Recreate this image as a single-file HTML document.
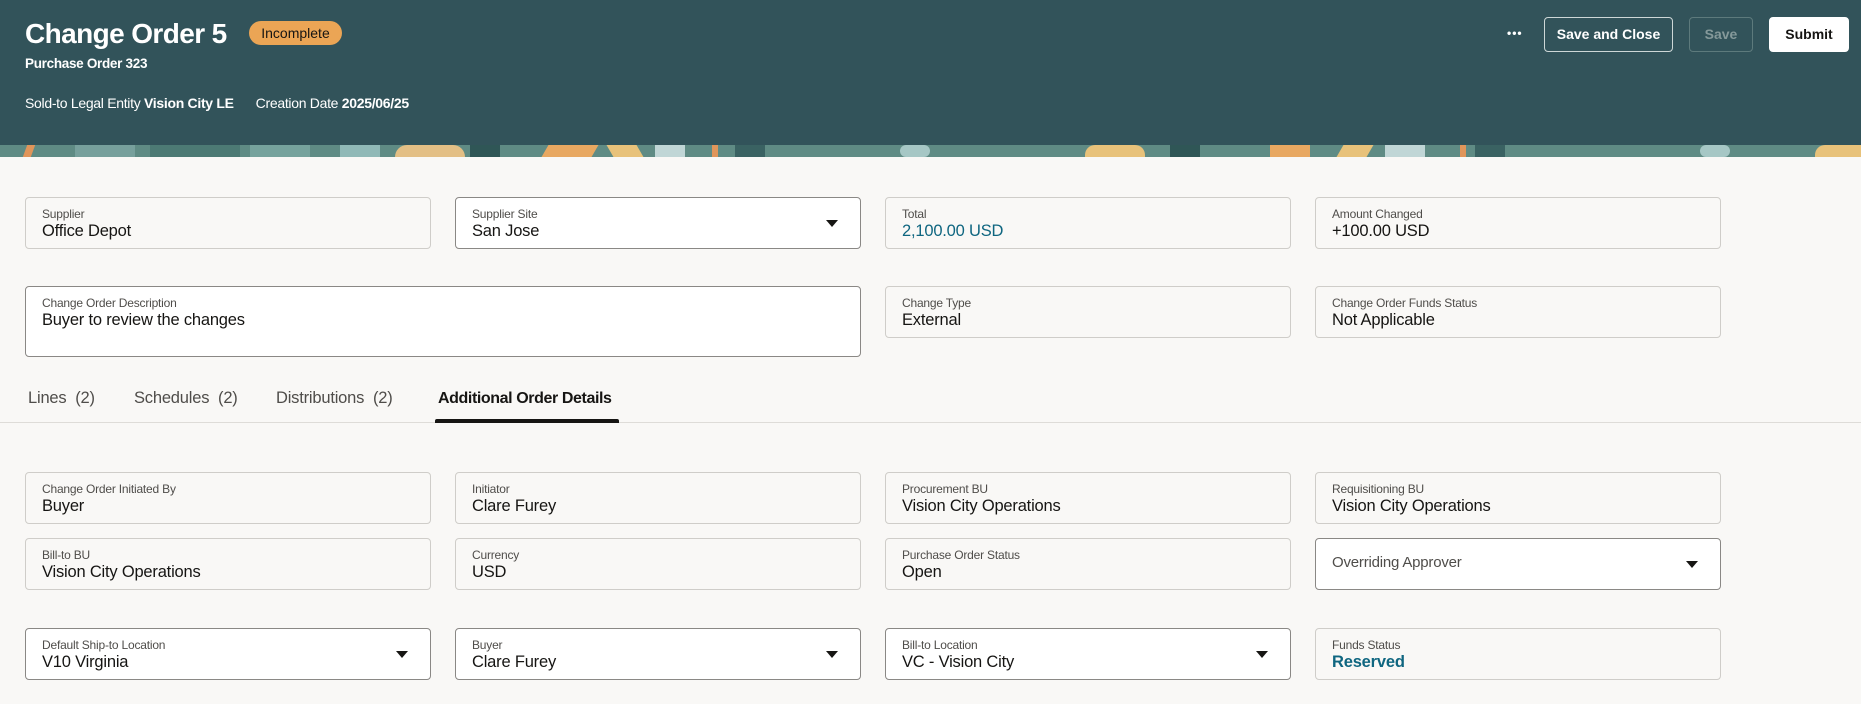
<!DOCTYPE html>
<html><head><meta charset="utf-8">
<style>
*{box-sizing:border-box;margin:0;padding:0}
body{width:1861px;height:704px;overflow:hidden;background:#f9f8f6;font-family:"Liberation Sans",sans-serif;color:#161513;position:relative}
.hdr{position:absolute;left:0;top:0;width:1861px;height:145px;background:#32535a}
.band{position:absolute;left:0;top:145px;width:1861px;height:12px;background:#5f8b84;overflow:hidden}
.band span{position:absolute;top:0;height:12px}
.t{position:absolute;white-space:nowrap}
.box{position:absolute;border:1px solid #cfcdc9;border-radius:4px;background:#f9f8f6}
.box.w{background:#fff;border-color:#8a8885}
.lab{position:absolute;left:16px;top:9px;font-size:12px;color:#4f4d4a;letter-spacing:-0.2px}
.val{position:absolute;left:16px;top:24px;font-size:16.5px;color:#161513;letter-spacing:-0.2px}
.val.b{color:#0f6680}
.arr{position:absolute;right:22px;top:50%;margin-top:-3px;width:0;height:0;border-left:6px solid transparent;border-right:6px solid transparent;border-top:7px solid #161513}
.btn{position:absolute;top:17px;height:35px;border-radius:4px;font-size:14px;font-weight:bold;text-align:center;line-height:33px}
.tab{position:absolute;top:389px;font-size:16.5px;color:#4f4d4a;letter-spacing:-0.2px}
</style></head><body>
<div class="hdr"></div>
<div class="band">
<span style="left:25px;width:8px;background:#e0955a;transform:skewX(-20deg)"></span>
<span style="left:75px;width:60px;background:#8fb5b4;opacity:.5"></span>
<span style="left:150px;width:90px;background:#4c7a74"></span>
<span style="left:250px;width:60px;background:#76a39d"></span>
<span style="left:340px;width:40px;background:#90b9b7"></span>
<span style="left:395px;width:70px;background:#e3bf85;border-radius:12px 12px 0 0"></span>
<span style="left:470px;width:30px;background:#2f5656"></span>
<span style="left:545px;width:50px;background:#e8a861;transform:skewX(-30deg)"></span>
<span style="left:610px;width:30px;background:#e8c27a;transform:skewX(30deg)"></span>
<span style="left:655px;width:30px;background:#c0d6d6"></span>
<span style="left:712px;width:6px;background:#e0955a"></span>
<span style="left:735px;width:30px;background:#3a6262"></span>
<span style="left:900px;width:30px;background:#a6c7c5;border-radius:8px"></span>
<span style="left:1085px;width:60px;background:#e8c27a;border-radius:10px 10px 0 0"></span>
<span style="left:1170px;width:30px;background:#2f5656"></span>
<span style="left:1270px;width:40px;background:#e8a861"></span>
<span style="left:1340px;width:30px;background:#e8c27a;transform:skewX(-30deg)"></span>
<span style="left:1385px;width:40px;background:#c0d6d6"></span>
<span style="left:1460px;width:6px;background:#e0955a"></span>
<span style="left:1475px;width:30px;background:#3a6262"></span>
<span style="left:1700px;width:30px;background:#a6c7c5;border-radius:8px"></span>
<span style="left:1815px;width:46px;background:#e8c27a;border-radius:10px 0 0 0"></span>
</div>

<div class="t" style="left:25px;top:18px;font-size:28px;font-weight:bold;color:#fff;letter-spacing:-0.6px">Change Order 5</div>
<div class="t" style="left:249px;top:21px;width:93px;height:24px;border-radius:12px;background:#eba555;color:#161513;font-size:14px;text-align:center;line-height:24px">Incomplete</div>
<div class="t" style="left:25px;top:56px;font-size:13.5px;font-weight:bold;color:#fff;letter-spacing:-0.3px">Purchase Order 323</div>
<div class="t" style="left:25px;top:95px;font-size:14px;color:#fff;letter-spacing:-0.3px">Sold-to Legal Entity <b>Vision City LE</b><span style="display:inline-block;width:22px"></span>Creation Date <b>2025/06/25</b></div>

<div class="t" style="left:1507px;top:26px;font-size:12px;font-weight:bold;color:#fff;letter-spacing:1px">•••</div>
<div class="btn" style="left:1544px;width:129px;border:1px solid #cdd7d7;color:#fff">Save and Close</div>
<div class="btn" style="left:1689px;width:64px;border:1px solid #5d7a7c;color:#85999a">Save</div>
<div class="btn" style="left:1769px;width:80px;background:#fff;color:#161513;border:1px solid #fff">Submit</div>

<div class="box" style="left:25px;top:197px;width:406px;height:52px"><div class="lab">Supplier</div><div class="val">Office Depot</div></div>
<div class="box w" style="left:455px;top:197px;width:406px;height:52px"><div class="lab">Supplier Site</div><div class="val">San Jose</div><div class="arr"></div></div>
<div class="box" style="left:885px;top:197px;width:406px;height:52px"><div class="lab">Total</div><div class="val b">2,100.00 USD</div></div>
<div class="box" style="left:1315px;top:197px;width:406px;height:52px"><div class="lab">Amount Changed</div><div class="val">+100.00 USD</div></div>

<div class="box w" style="left:25px;top:286px;width:836px;height:71px"><div class="lab">Change Order Description</div><div class="val">Buyer to review the changes</div></div>
<div class="box" style="left:885px;top:286px;width:406px;height:52px"><div class="lab">Change Type</div><div class="val">External</div></div>
<div class="box" style="left:1315px;top:286px;width:406px;height:52px"><div class="lab">Change Order Funds Status</div><div class="val">Not Applicable</div></div>

<div class="tab" style="left:28px">Lines&nbsp; (2)</div>
<div class="tab" style="left:134px">Schedules&nbsp; (2)</div>
<div class="tab" style="left:276px">Distributions&nbsp; (2)</div>
<div class="tab" style="left:438px;color:#161513;font-weight:bold;font-size:16px;top:390px;letter-spacing:-0.4px">Additional Order Details</div>
<div style="position:absolute;left:0;top:422px;width:1861px;height:1px;background:#dedcd8"></div>
<div style="position:absolute;left:435px;top:419px;width:184px;height:4px;background:#161513;border-radius:2px 2px 0 0"></div>

<div class="box" style="left:25px;top:472px;width:406px;height:52px"><div class="lab">Change Order Initiated By</div><div class="val">Buyer</div></div>
<div class="box" style="left:455px;top:472px;width:406px;height:52px"><div class="lab">Initiator</div><div class="val">Clare Furey</div></div>
<div class="box" style="left:885px;top:472px;width:406px;height:52px"><div class="lab">Procurement BU</div><div class="val">Vision City Operations</div></div>
<div class="box" style="left:1315px;top:472px;width:406px;height:52px"><div class="lab">Requisitioning BU</div><div class="val">Vision City Operations</div></div>

<div class="box" style="left:25px;top:538px;width:406px;height:52px"><div class="lab">Bill-to BU</div><div class="val">Vision City Operations</div></div>
<div class="box" style="left:455px;top:538px;width:406px;height:52px"><div class="lab">Currency</div><div class="val">USD</div></div>
<div class="box" style="left:885px;top:538px;width:406px;height:52px"><div class="lab">Purchase Order Status</div><div class="val">Open</div></div>
<div class="box w" style="left:1315px;top:538px;width:406px;height:52px"><div class="val" style="top:15px;font-size:15px;color:#4f4d4a">Overriding Approver</div><div class="arr"></div></div>

<div class="box w" style="left:25px;top:628px;width:406px;height:52px"><div class="lab">Default Ship-to Location</div><div class="val">V10 Virginia</div><div class="arr"></div></div>
<div class="box w" style="left:455px;top:628px;width:406px;height:52px"><div class="lab">Buyer</div><div class="val">Clare Furey</div><div class="arr"></div></div>
<div class="box w" style="left:885px;top:628px;width:406px;height:52px"><div class="lab">Bill-to Location</div><div class="val">VC - Vision City</div><div class="arr"></div></div>
<div class="box" style="left:1315px;top:628px;width:406px;height:52px"><div class="lab">Funds Status</div><div class="val b" style="font-weight:bold">Reserved</div></div>
</body></html>
